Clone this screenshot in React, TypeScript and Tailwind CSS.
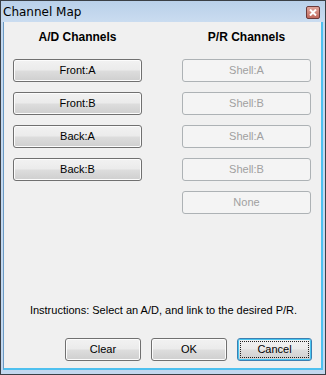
import React, { useState } from "react";

const leftChannels = ["Front:A", "Front:B", "Back:A", "Back:B"];
const rightChannels = ["Shell:A", "Shell:B", "Shell:A", "Shell:B", "None"];

const btn =
  "h-[23px] rounded-[3px] border border-[#707070] bg-[linear-gradient(#f2f2f2_0%,#ebebeb_48%,#dddddd_52%,#cfcfcf_100%)] text-[11px] text-black shadow-[inset_0_0_0_1px_#fcfcfc]";
const btnDisabled =
  "h-[23px] rounded-[3px] border border-[#adb2b5] bg-[#f4f4f4] text-[11px] text-[#a0a0a0]";

const App = () => {
  const [selected, setSelected] = useState<string | null>(null);

  return (
    <div
      className="w-[326px] h-[375px] flex flex-col border border-[#3a3f45] bg-[#c3d8ef]"
      style={{ fontFamily: '"Liberation Sans", Arial, sans-serif' }}
    >
      <div className="h-[21px] flex items-center justify-between pl-[2px] pr-[5px] bg-[linear-gradient(#b9d0e9,#cadcf0)]">
        <span
          className="text-[12px] text-black leading-none pt-[1px]"
          style={{ fontFamily: '"DejaVu Sans", "Noto Sans", sans-serif' }}
        >
          Channel Map
        </span>
        <div className="w-[14px] h-[13px] mt-[2px] flex items-center justify-center rounded-[2px] border border-[#6b3a3a] bg-[linear-gradient(#e0a49a,#c0685c)]">
          <svg width="8" height="7" viewBox="0 0 8 7">
            <path d="M1 0.5 L7 6.5 M7 0.5 L1 6.5" stroke="#ffffff" strokeWidth="2" />
          </svg>
        </div>
      </div>
      <div className="flex-1 flex ml-[2px] mr-[2px] mb-[4px] border-l border-[#6a9ac4] border-r-2 border-r-[#4ec0ef] border-b-2 border-b-[#4ec0ef]">
        <div className="flex-1 flex flex-col bg-[#f0f0f0]">
          <div className="flex pl-[9px] pt-[9px]">
            <div className="w-[129px] flex flex-col">
              <div className="h-[13px] text-center text-[12px] font-bold leading-[13px]">A/D Channels</div>
              <div className="flex flex-col gap-[10px] mt-[15px]">
                {leftChannels.map((c) => (
                  <button key={c} className={btn} onClick={() => setSelected(c)}>
                    {c}
                  </button>
                ))}
              </div>
            </div>
            <div className="w-[129px] ml-[40px] flex flex-col">
              <div className="h-[13px] text-center text-[12px] font-bold leading-[13px]">P/R Channels</div>
              <div className="flex flex-col gap-[10px] mt-[15px]">
                {rightChannels.map((c, i) => (
                  <button key={i} className={btnDisabled} disabled={!selected}>
                    {c}
                  </button>
                ))}
              </div>
            </div>
          </div>
          <div className="flex-1" />
          <div className="text-center text-[11px] leading-[13px] pl-[2px]">
            Instructions: Select an A/D, and link to the desired P/R.
          </div>
          <div className="flex justify-end gap-[10px] pr-[9px] mt-[21px] mb-[7px]">
            <button className={`${btn} w-[76px]`} onClick={() => setSelected(null)}>
              Clear
            </button>
            <button className={`${btn} w-[76px]`}>OK</button>
            <button className="h-[23px] w-[75px] rounded-[3px] border border-[#3c7fb1] bg-[linear-gradient(#f2f2f2_0%,#ebebeb_48%,#dddddd_52%,#cfcfcf_100%)] text-[11px] text-black p-[2px] shadow-[inset_0_0_0_1px_#48c5f0]">
              <span className="flex h-full w-full items-center justify-center border border-dotted border-[#202020]">
                Cancel
              </span>
            </button>
          </div>
        </div>
      </div>
    </div>
  );
};

export default App;
